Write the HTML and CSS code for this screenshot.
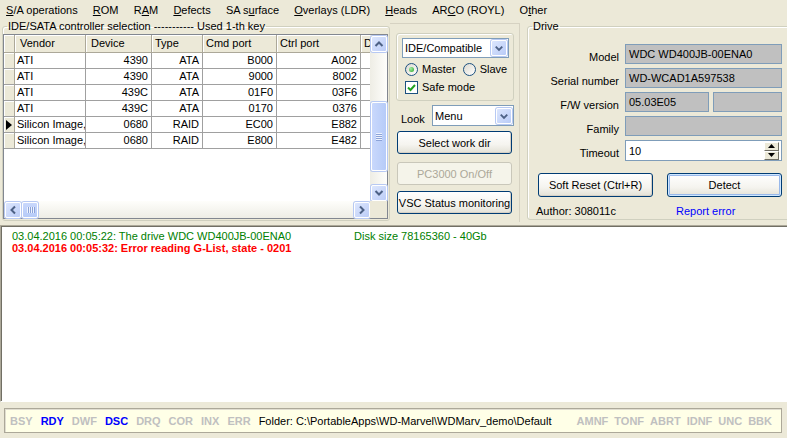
FILE: index.html
```html
<!DOCTYPE html>
<html lang="en">
<head>
    <meta charset="UTF-8">
    <meta name="viewport" content="width=device-width, initial-scale=1.0">
    <title>WD Marvel</title>
    <link rel="stylesheet" href="styles.css">
</head>
<body>
    <div class="menubar">
        <span class="menu-item"><u>S</u>/A operations</span>
        <span class="menu-item"><u>R</u>OM</span>
        <span class="menu-item">R<u>A</u>M</span>
        <span class="menu-item"><u>D</u>efects</span>
        <span class="menu-item">SA s<u>u</u>rface</span>
        <span class="menu-item"><u>O</u>verlays (LDR)</span>
        <span class="menu-item"><u>H</u>eads</span>
        <span class="menu-item">AR<u>C</u>O (ROYL)</span>
        <span class="menu-item">O<u>t</u>her</span>
    </div>

    <div class="top">
        <fieldset class="group ctrl">
            <legend>IDE/SATA controller selection ----------- Used 1-th key</legend>
            <div class="grid">
                <div class="grid-main">
                    <div class="cells">
                        <div class="row head">
                            <div class="c ind"></div>
                            <div class="c vendor pad5">Vendor</div>
                            <div class="c device pad5">Device</div>
                            <div class="c type">Type</div>
                            <div class="c cmd">Cmd port</div>
                            <div class="c ctrlp">Ctrl port</div>
                            <div class="c dcol">D</div>
                        </div>
                        <div class="row">
                            <div class="c ind"></div>
                            <div class="c vendor">ATI</div>
                            <div class="c device num">4390</div>
                            <div class="c type num">ATA</div>
                            <div class="c cmd num">B000</div>
                            <div class="c ctrlp num">A002</div>
                            <div class="c dcol"></div>
                        </div>
                        <div class="row">
                            <div class="c ind"></div>
                            <div class="c vendor">ATI</div>
                            <div class="c device num">4390</div>
                            <div class="c type num">ATA</div>
                            <div class="c cmd num">9000</div>
                            <div class="c ctrlp num">8002</div>
                            <div class="c dcol"></div>
                        </div>
                        <div class="row">
                            <div class="c ind"></div>
                            <div class="c vendor">ATI</div>
                            <div class="c device num">439C</div>
                            <div class="c type num">ATA</div>
                            <div class="c cmd num">01F0</div>
                            <div class="c ctrlp num">03F6</div>
                            <div class="c dcol"></div>
                        </div>
                        <div class="row">
                            <div class="c ind"></div>
                            <div class="c vendor">ATI</div>
                            <div class="c device num">439C</div>
                            <div class="c type num">ATA</div>
                            <div class="c cmd num">0170</div>
                            <div class="c ctrlp num">0376</div>
                            <div class="c dcol"></div>
                        </div>
                        <div class="row">
                            <div class="c ind"><svg width="6" height="10" viewBox="0 0 6 10"><polygon points="0,0 6,5 0,10" fill="#000"/></svg></div>
                            <div class="c vendor">Silicon Image,</div>
                            <div class="c device num">0680</div>
                            <div class="c type num">RAID</div>
                            <div class="c cmd num">EC00</div>
                            <div class="c ctrlp num">E882</div>
                            <div class="c dcol"></div>
                        </div>
                        <div class="row">
                            <div class="c ind"></div>
                            <div class="c vendor">Silicon Image,</div>
                            <div class="c device num">0680</div>
                            <div class="c type num">RAID</div>
                            <div class="c cmd num">E800</div>
                            <div class="c ctrlp num">E482</div>
                            <div class="c dcol"></div>
                        </div>
                    </div>
                    <div class="vscroll">
                        <div class="sbtn"><svg width="14" height="14" viewBox="0 0 14 14"><polyline points="3.5,9 7,5.5 10.5,9" fill="none" stroke="#4d6185" stroke-width="2"/></svg></div>
                        <div class="vtrack">
                            <div class="vthumb"><span></span><span></span><span></span><span></span></div>
                        </div>
                        <div class="sbtn"><svg width="14" height="14" viewBox="0 0 14 14"><polyline points="3.5,5 7,8.5 10.5,5" fill="none" stroke="#4d6185" stroke-width="2"/></svg></div>
                    </div>
                </div>
                <div class="hscroll-row">
                    <div class="hscroll">
                        <div class="sbtn"><svg width="14" height="14" viewBox="0 0 14 14"><polyline points="9,3.5 5.5,7 9,10.5" fill="none" stroke="#4d6185" stroke-width="2"/></svg></div>
                        <div class="hthumb"><span></span><span></span><span></span><span></span></div>
                        <div class="htrack"></div>
                        <div class="sbtn"><svg width="14" height="14" viewBox="0 0 14 14"><polyline points="5,3.5 8.5,7 5,10.5" fill="none" stroke="#4d6185" stroke-width="2"/></svg></div>
                    </div>
                    <div class="corner"></div>
                </div>
            </div>
        </fieldset>

        <div class="side">
            <div class="box">
                <div class="combo wide">
                    <span class="combo-text">IDE/Compatible</span>
                    <span class="drop"><svg width="15" height="16" viewBox="0 0 15 16"><polyline points="4,6.5 7.5,10 11,6.5" fill="none" stroke="#4d6185" stroke-width="2"/></svg></span>
                </div>
                <div class="radios">
                    <label class="radio"><span class="dot on"></span>Master</label>
                    <label class="radio"><span class="dot"></span>Slave</label>
                </div>
                <label class="check"><span class="tick"><svg width="11" height="11" viewBox="0 0 11 11"><polyline points="2,5.5 4.5,8 9,3" fill="none" stroke="#21a121" stroke-width="2"/></svg></span>Safe mode</label>
            </div>
            <div class="look-row">
                <span class="look">Look</span>
                <div class="combo small">
                    <span class="combo-text">Menu</span>
                    <span class="drop"><svg width="15" height="16" viewBox="0 0 15 16"><polyline points="4,6.5 7.5,10 11,6.5" fill="none" stroke="#4d6185" stroke-width="2"/></svg></span>
                </div>
            </div>
            <button class="btn side-btn first">Select work dir</button>
            <button class="btn side-btn" disabled>PC3000 On/Off</button>
            <button class="btn side-btn last">VSC Status monitoring</button>
        </div>

        <fieldset class="group drive">
            <legend>Drive</legend>
            <div class="fields">
                <span class="lbl">Model</span>
                <div class="field">WDC WD400JB-00ENA0</div>
                <span class="lbl">Serial number</span>
                <div class="field">WD-WCAD1A597538</div>
                <span class="lbl">F/W version</span>
                <div class="split">
                    <div class="field fw">05.03E05</div>
                    <div class="field"></div>
                </div>
                <span class="lbl">Family</span>
                <div class="field"></div>
                <span class="lbl">Timeout</span>
                <div class="edit">
                    <span>10</span>
                    <span class="spin">
                        <span class="spin-btn"><svg width="7" height="4" viewBox="0 0 7 4"><polygon points="0,4 3.5,0 7,4" fill="#000"/></svg></span>
                        <span class="spin-btn"><svg width="7" height="4" viewBox="0 0 7 4"><polygon points="0,0 3.5,4 7,0" fill="#000"/></svg></span>
                    </span>
                </div>
            </div>
            <div class="drive-btns">
                <button class="btn">Soft Reset (Ctrl+R)</button>
                <button class="btn default">Detect</button>
            </div>
            <div class="author">
                <span class="author-name">Author: 308011c</span>
                <a class="report">Report error</a>
            </div>
        </fieldset>
    </div>

    <div class="log">
        <div class="log-line ok"><span class="log-msg">03.04.2016 00:05:22: The drive WDC WD400JB-00ENA0</span><span>Disk size 78165360 - 40Gb</span></div>
        <div class="log-line err">03.04.2016 00:05:32: Error reading G-List, state - 0201</div>
    </div>

    <div class="status">
        <div class="flags">
            <span class="flag">BSY</span>
            <span class="flag on">RDY</span>
            <span class="flag">DWF</span>
            <span class="flag on">DSC</span>
            <span class="flag">DRQ</span>
            <span class="flag">COR</span>
            <span class="flag">INX</span>
            <span class="flag">ERR</span>
            <span class="folder">Folder: C:\PortableApps\WD-Marvel\WDMarv_demo\Default</span>
        </div>
        <div class="flags right">
            <span class="flag">AMNF</span>
            <span class="flag">TONF</span>
            <span class="flag">ABRT</span>
            <span class="flag">IDNF</span>
            <span class="flag">UNC</span>
            <span class="flag">BBK</span>
        </div>
    </div>
</body>
</html>
```

FILE: styles.css
```css
*{
    margin: 0;
    padding: 0;
    box-sizing: border-box;
}
body{
    width: 787px;
    height: 438px;
    overflow: hidden;
    background-color: #ECE9D8;
    font-family: "Liberation Sans", Arial, sans-serif;
    font-size: 11px;
    color: black;
}

/* menu */
.menubar{
    height: 20px;
    display: flex;
    margin-left: -1.5px;
}
.menu-item{
    padding: 0 7.6px;
    line-height: 21px;
    white-space: nowrap;
}
.menu-item u{
    text-decoration: underline;
}

/* top area */
.top{
    height: 202px;
    display: flex;
    overflow: hidden;
}
.group{
    border: 1px solid #D0D0BF;
    border-radius: 3px;
    box-shadow: inset 1px 1px 0 #fff;
}
.group legend{
    margin-left: 4px;
    padding: 0 1px;
    line-height: 13px;
}
.ctrl{
    width: 388px;
    height: 201px;
    margin-left: 2px;
    flex-shrink: 0;
}

/* data grid */
.grid{
    margin-top: 1px;
    width: 385px;
    height: 185px;
    border: 1px solid #828790;
    background-color: white;
    display: flex;
    flex-direction: column;
}
.grid-main{
    height: 166px;
    display: flex;
}
.cells{
    width: 366px;
    overflow: hidden;
}
.row{
    height: 16px;
    display: flex;
    border-bottom: 1px solid #a0a0a0;
}
.row.head{
    height: 18px;
    border-bottom-color: #aca899;
}
.c{
    flex-shrink: 0;
    border-right: 1px solid #a0a0a0;
    padding: 0 3px 0 2px;
    line-height: 15px;
    white-space: nowrap;
    overflow: hidden;
}
.head .c{
    background-color: #ECE9D8;
    border-right-color: #aca899;
    box-shadow: inset 1px 1px 0 #fff;
    line-height: 17px;
    padding-left: 3px;
}
.head .pad5{
    padding-left: 5px;
}
.num{
    text-align: right;
}
.ind{
    width: 11px;
    padding: 0;
    background-color: #ECE9D8;
    border-right-color: #aca899;
    box-shadow: inset 1px 1px 0 #fff;
    display: flex;
    align-items: center;
    justify-content: center;
}
.vendor{ width: 71px; }
.device{ width: 66px; }
.type{ width: 51px; }
.cmd{ width: 74px; }
.ctrlp{ width: 84px; }
.dcol{ width: 20px; }

/* scrollbars */
.vscroll{
    width: 17px;
    display: flex;
    flex-direction: column;
    background: linear-gradient(90deg, #eeede5, #fefefb);
    padding: 1px 0 0 1px;
}
.sbtn{
    width: 16px;
    height: 16px;
    flex-shrink: 0;
    border: 1px solid #fff;
    border-radius: 2px;
    background: linear-gradient(135deg, #dce6fd, #bccdf7);
    box-shadow: 0 0 0 1px #b7c9f3;
    display: flex;
    align-items: center;
    justify-content: center;
}
.vtrack{
    flex: 1;
    padding-top: 50px;
}
.vthumb{
    width: 16px;
    height: 69px;
    border: 1px solid #fff;
    border-radius: 2px;
    background: linear-gradient(90deg, #c9d8fc, #b6cbf8);
    box-shadow: 0 0 0 1px #b7c9f3;
    display: flex;
    flex-direction: column;
    align-items: center;
    justify-content: center;
    gap: 1px;
}
.vthumb span{
    width: 6px;
    height: 1px;
    background-color: #eef3fe;
    box-shadow: 0 1px 0 #8ca3d8;
}
.hscroll-row{
    height: 17px;
    display: flex;
}
.hscroll{
    width: 366px;
    display: flex;
    align-items: center;
    padding-left: 1px;
    background: linear-gradient(180deg, #fefefb, #eeede5);
}
.hthumb{
    width: 16px;
    height: 16px;
    margin-left: 1px;
    border: 1px solid #fff;
    border-radius: 2px;
    background: linear-gradient(180deg, #c9d8fc, #b6cbf8);
    box-shadow: 0 0 0 1px #b7c9f3;
    display: flex;
    align-items: center;
    justify-content: center;
    gap: 1px;
}
.hthumb span{
    width: 1px;
    height: 6px;
    background-color: #eef3fe;
    box-shadow: 1px 0 0 #8ca3d8;
}
.htrack{
    flex: 1;
}
.corner{
    flex: 1;
    background-color: #ECE9D8;
}

/* middle panel */
.side{
    width: 130px;
    margin-top: 3px;
    flex-shrink: 0;
    border-top: 1px solid #d6d2c2;
    border-right: 1px solid #d6d2c2;
    padding-left: 6px;
}
.box{
    width: 118px;
    height: 68px;
    margin-top: 9px;
    border: 1px solid #D0D0BF;
    border-radius: 3px;
    box-shadow: inset 1px 1px 0 #fff;
    padding: 4px 0 0 5px;
}
.combo{
    height: 20px;
    border: 1px solid #7F9DB9;
    background-color: white;
    display: flex;
    align-items: center;
    justify-content: space-between;
    padding: 1px 1px 1px 2px;
}
.combo.wide{
    width: 107px;
}
.combo.small{
    width: 82px;
    height: 21px;
}
.combo-text{
    white-space: nowrap;
}
.drop{
    width: 16px;
    height: 16px;
    border: 1px solid #fff;
    border-radius: 2px;
    background: linear-gradient(135deg, #dce6fd, #b9cbf7);
    box-shadow: 0 0 0 1px #b7c9f3;
    display: flex;
    align-items: center;
    justify-content: center;
}
.radios{
    display: flex;
    gap: 7px;
    margin: 4px 0 0 3px;
    height: 14px;
}
.radio, .check{
    display: flex;
    align-items: center;
    gap: 4px;
    line-height: 14px;
}
.dot{
    width: 13px;
    height: 13px;
    border-radius: 50%;
    border: 1px solid #1c5180;
    background: linear-gradient(135deg, #dcd9cf, #fff);
    display: flex;
    align-items: center;
    justify-content: center;
}
.dot.on::after{
    content: "";
    width: 5px;
    height: 5px;
    border-radius: 50%;
    background: radial-gradient(circle at 35% 35%, #a6eea5, #21a121);
}
.check{
    margin: 4px 0 0 3px;
}
.tick{
    width: 13px;
    height: 13px;
    border: 1px solid #1c5180;
    background-color: white;
    display: flex;
    align-items: center;
    justify-content: center;
}
.look-row{
    display: flex;
    align-items: center;
    justify-content: space-between;
    width: 118px;
    margin-top: 4px;
    padding-left: 5px;
}
.look{
    padding-top: 6px;
}
.btn{
    display: block;
    height: 23px;
    font-family: "Liberation Sans", Arial, sans-serif;
    font-size: 11px;
    color: black;
    border: 1px solid #003c74;
    border-radius: 3px;
    background: linear-gradient(180deg, #fff 0%, #f5f4ef 60%, #e3e1d6 100%);
    box-shadow: inset -1px -1px 0 #d6d0c5;
    white-space: nowrap;
}
.btn:disabled{
    color: #aca899;
    border-color: #c9c7ba;
    background: #f5f4ea;
    box-shadow: none;
}
.side-btn{
    width: 115px;
    margin-left: 1px;
}
.side-btn.first{
    margin-top: 5px;
}
.side-btn:disabled{
    margin-top: 8px;
}
.side-btn.last{
    margin-top: 6px;
}

/* drive group */
.drive{
    width: 265px;
    margin: 0 0 0 7px;
    flex-shrink: 0;
    height: 200px;
}
.fields{
    display: grid;
    grid-template-columns: 91px 157px;
    column-gap: 6px;
    row-gap: 4px;
    padding-top: 11px;
}
.lbl{
    text-align: right;
    padding-top: 7px;
    line-height: 13px;
    white-space: nowrap;
}
.field{
    height: 20px;
    border: 1px solid #7F9DB9;
    background-color: #C0C0C0;
    padding: 0 3px;
    line-height: 18px;
}
.split{
    display: flex;
    gap: 4px;
}
.split .field{
    flex: 1;
}
.split .fw{
    flex: 0 0 84px;
}
.edit{
    height: 21px;
    border: 1px solid #7F9DB9;
    background-color: white;
    padding: 0 2px 0 3px;
    display: flex;
    align-items: center;
    justify-content: space-between;
}
.spin{
    display: flex;
    flex-direction: column;
}
.spin-btn{
    width: 15px;
    height: 9px;
    background-color: #ECE9D8;
    border: 1px solid;
    border-color: #fff #716f64 #716f64 #fff;
    display: flex;
    align-items: center;
    justify-content: center;
}
.drive-btns{
    display: flex;
    gap: 14px;
    margin: 12px 0 0 10px;
}
.drive-btns .btn{
    width: 115px;
    height: 24px;
}
.btn.default{
    box-shadow: inset 0 0 0 1px #cee7ff, inset 0 0 0 2px #98b8ea;
}
.author{
    display: flex;
    margin: 8px 0 0 8px;
    line-height: 13px;
}
.author-name{
    width: 140px;
}
.report{
    color: #0000FF;
}

/* log */
.log{
    height: 177px;
    margin-top: 3px;
    background-color: white;
    border-top: 1px solid #aca899;
    border-left: 1px solid #aca899;
    border-bottom: 1px solid #fff;
    box-shadow: inset 1px 1px 0 #716f64;
    padding: 4px 0 0 11px;
    line-height: 12px;
}
.log-line.ok{
    color: #008000;
    display: flex;
}
.log-msg{
    width: 342px;
}
.log-line.err{
    color: #FF0000;
    font-weight: bold;
}

/* status bar */
.status{
    width: 778px;
    height: 25px;
    margin: 6px 0 0 4px;
    background-color: #ffffe7;
    border: 1px solid #aca899;
    box-shadow: inset 1px 1px 0 #e0ddd0;
    display: flex;
    align-items: center;
    justify-content: space-between;
    padding: 1px 9px 0 5px;
}
.flags{
    display: flex;
    gap: 8px;
    align-items: center;
}
.flags.right{
    gap: 6px;
}
.flag{
    font-weight: bold;
    color: #c0c0c0;
}
.flag.on{
    color: #0000FF;
}
.folder{
    color: black;
}
```
